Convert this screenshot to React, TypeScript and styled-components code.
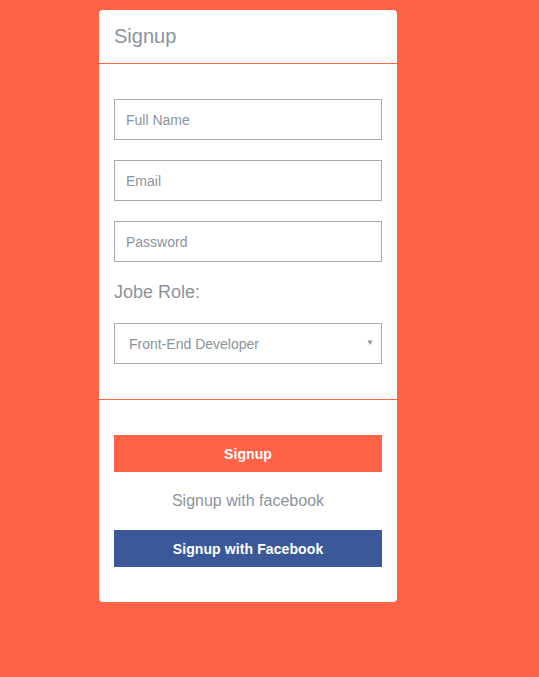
import styled, { createGlobalStyle } from "styled-components";

const GlobalStyle = createGlobalStyle`
  html, body {
    margin: 0;
    padding: 0;
    background: #ff6347;
    font-family: "Liberation Sans", Arial, sans-serif;
  }
`;

const Page = styled.div`
  min-height: 677px;
  padding: 10px 0 0 99px;
  box-sizing: border-box;
`;

const Card = styled.form`
  width: 298px;
  background: #fff;
  border-radius: 4px;
`;

const Header = styled.div`
  padding: 15px;
  border-bottom: 1px solid #ff6347;
`;

const Title = styled.h2`
  margin: 0;
  font-size: 20px;
  line-height: 23px;
  font-weight: normal;
  color: #8a949e;
`;

const Section = styled.div<{ $divider?: boolean }>`
  padding: 35px 15px;
  display: flex;
  flex-direction: column;
  border-bottom: ${({ $divider }) => ($divider ? "1px solid #ff6347" : "none")};
`;

const Fields = styled.div`
  display: flex;
  flex-direction: column;
  gap: 20px;
`;

const Input = styled.input`
  height: 41px;
  box-sizing: border-box;
  width: 100%;
  border: 1px solid #a9a9a9;
  border-radius: 0;
  padding: 0 11px;
  font-family: inherit;
  font-size: 14px;
  color: #555;
  outline: none;

  &::placeholder {
    color: #8a949e;
  }
`;

const Label = styled.label`
  font-size: 18px;
  line-height: 21px;
  color: #8a949e;
`;

const SelectWrap = styled.div`
  position: relative;
  height: 41px;
`;

const Select = styled.select`
  appearance: none;
  width: 100%;
  height: 41px;
  box-sizing: border-box;
  border: 1px solid #a9a9a9;
  border-radius: 0;
  background: #fff;
  padding: 0 14px;
  font-family: inherit;
  font-size: 14px;
  color: #8a949e;
  outline: none;
`;

const Arrow = styled.span`
  position: absolute;
  right: 8px;
  top: 16px;
  font-size: 8px;
  line-height: 8px;
  color: #8a949e;
  pointer-events: none;
`;

const Button = styled.button<{ $bg: string }>`
  display: block;
  width: 100%;
  height: 37px;
  border: none;
  border-radius: 0;
  background: ${({ $bg }) => $bg};
  color: #fff;
  font-family: "Liberation Sans", Arial, sans-serif;
  font-weight: bold;
  font-size: 14px;
  letter-spacing: 0.1px;
  cursor: pointer;
`;

const OrText = styled.div`
  height: 58px;
  line-height: 58px;
  text-align: center;
  font-size: 16px;
  color: #8a949e;
`;

export default function App() {
  return (
    <>
      <GlobalStyle />
      <Page>
        <Card onSubmit={(e) => e.preventDefault()}>
          <Header>
            <Title>Signup</Title>
          </Header>
          <Section $divider>
            <Fields>
              <Input type="text" placeholder="Full Name" />
              <Input type="email" placeholder="Email" />
              <Input type="password" placeholder="Password" />
              <Label htmlFor="role">Jobe Role:</Label>
              <SelectWrap>
                <Select id="role" defaultValue="fe">
                  <option value="fe">Front-End Developer</option>
                  <option value="be">Back-End Developer</option>
                  <option value="fs">Full-Stack Developer</option>
                </Select>
                <Arrow>▼</Arrow>
              </SelectWrap>
            </Fields>
          </Section>
          <Section>
            <Button type="submit" $bg="#ff6347">
              Signup
            </Button>
            <OrText>Signup with facebook</OrText>
            <Button type="button" $bg="#3b5998">
              Signup with Facebook
            </Button>
          </Section>
        </Card>
      </Page>
    </>
  );
}
